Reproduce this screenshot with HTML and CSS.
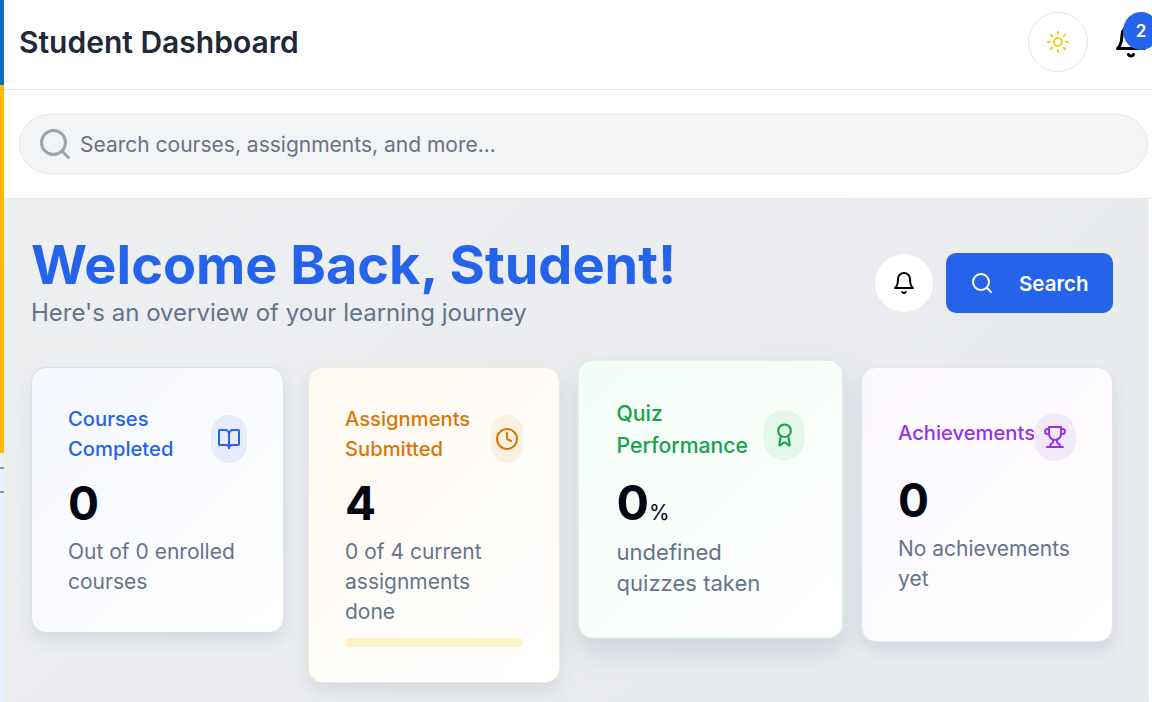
FILE: index.html
```html
<!DOCTYPE html>
<html lang="en">
<head>
<meta charset="utf-8">
<title>Student Dashboard</title>
<link rel="stylesheet" href="styles.css">
</head>
<body>
<div class="app">
  <aside class="rail">
    <div class="rail-blue"></div>
    <div class="rail-amber"></div>
    <div class="rail-rest">
      <div class="rail-line"></div>
      <div class="rail-line rail-line-2"></div>
    </div>
  </aside>
  <div class="page">
    <header class="topbar">
      <h1 class="title">Student Dashboard</h1>
      <div class="top-actions">
        <button class="theme-btn" aria-label="Theme">
          <svg class="i-sun" viewBox="0 0 24 24"><circle cx="12" cy="12" r="4"/><path d="M12 2v2M12 20v2M4.93 4.93l1.41 1.41M17.66 17.66l1.41 1.41M2 12h2M20 12h2M6.34 17.66l-1.41 1.41M19.07 4.93l-1.41 1.41"/></svg>
        </button>
        <div class="notif">
          <svg class="i-bell-top" viewBox="0 0 24 24"><path d="M6 8a6 6 0 0 1 12 0c0 7 3 9 3 9H3s3-2 3-9"/><path d="M10.3 21a1.94 1.94 0 0 0 3.4 0"/></svg>
          <span class="badge">2</span>
        </div>
      </div>
    </header>
    <div class="searchbar">
      <div class="search-field">
        <svg class="i-search-lg" viewBox="0 0 24 24"><circle cx="11" cy="11" r="8"/><path d="m21 21-4.3-4.3"/></svg>
        <span class="placeholder">Search courses, assignments, and more...</span>
      </div>
    </div>
    <main class="main">
      <section class="hero">
        <div class="hero-text">
          <h2 class="welcome">Welcome Back, Student!</h2>
          <p class="subtitle">Here's an overview of your learning journey</p>
        </div>
        <div class="hero-actions">
          <button class="round-btn" aria-label="Notifications">
            <svg class="i-bell" viewBox="0 0 24 24"><path d="M6 8a6 6 0 0 1 12 0c0 7 3 9 3 9H3s3-2 3-9"/><path d="M10.3 21a1.94 1.94 0 0 0 3.4 0"/></svg>
          </button>
          <button class="search-btn">
            <svg class="i-search" viewBox="0 0 24 24"><circle cx="11" cy="11" r="8"/><path d="m21 21-4.3-4.3"/></svg>
            <span>Search</span>
          </button>
        </div>
      </section>
      <section class="cards">
        <article class="card card-blue">
          <div class="card-head">
            <h3 class="card-title">Courses Completed</h3>
            <div class="card-icon"><svg viewBox="0 0 24 24"><path d="M12 7v14"/><path d="M3 18a1 1 0 0 1-1-1V4a1 1 0 0 1 1-1h5a4 4 0 0 1 4 4 4 4 0 0 1 4-4h5a1 1 0 0 1 1 1v13a1 1 0 0 1-1 1h-6a3 3 0 0 0-3 3 3 3 0 0 0-3-3z"/></svg></div>
          </div>
          <div class="num">0</div>
          <p class="desc">Out of 0 enrolled courses</p>
        </article>
        <article class="card card-amber">
          <div class="card-head">
            <h3 class="card-title">Assignments Submitted</h3>
            <div class="card-icon"><svg viewBox="0 0 24 24"><circle cx="12" cy="12" r="10"/><path d="M12 6v6l4 2"/></svg></div>
          </div>
          <div class="num">4</div>
          <p class="desc">0 of 4 current assignments done</p>
          <div class="progress"></div>
        </article>
        <article class="card card-green">
          <div class="card-head">
            <h3 class="card-title">Quiz Performance</h3>
            <div class="card-icon"><svg viewBox="0 0 24 24"><path d="m15.477 12.89 1.515 8.526a.5.5 0 0 1-.81.47l-3.58-2.687a1 1 0 0 0-1.197 0l-3.586 2.686a.5.5 0 0 1-.81-.469l1.514-8.526"/><circle cx="12" cy="8" r="6"/></svg></div>
          </div>
          <div class="num">0<span class="unit">%</span></div>
          <p class="desc">undefined quizzes taken</p>
        </article>
        <article class="card card-purple">
          <div class="card-head">
            <h3 class="card-title">Achievements</h3>
            <div class="card-icon"><svg viewBox="0 0 24 24"><path d="M6 9H4.5a2.5 2.5 0 0 1 0-5H6"/><path d="M18 9h1.5a2.5 2.5 0 0 0 0-5H18"/><path d="M4 22h16"/><path d="M10 14.66V17c0 .55-.47.98-.97 1.21C7.85 18.75 7 20.24 7 22"/><path d="M14 14.66V17c0 .55.47.98.97 1.21C16.15 18.75 17 20.24 17 22"/><path d="M18 2H6v7a6 6 0 0 0 12 0V2Z"/></svg></div>
          </div>
          <div class="num">0</div>
          <p class="desc">No achievements yet</p>
        </article>
      </section>
    </main>
  </div>
</div>
</body>
</html>
```
FILE: styles.css
```css
* { box-sizing: border-box; }
html, body { margin: 0; height: 702px; overflow: hidden; background: #fff; }
body { font-family: Inter, "Liberation Sans", sans-serif; color: #0f172a; }
h1, h2, h3, p { margin: 0; }
button { font-family: inherit; border: 0; padding: 0; cursor: pointer; }
svg { display: block; fill: none; stroke: currentColor; stroke-linecap: round; stroke-linejoin: round; stroke-width: 2; }

.app { display: flex; width: 1152px; height: 702px; overflow: hidden; }
.rail { flex: 0 0 4px; display: flex; flex-direction: column; background: #e6f2ff; }
.rail-blue { height: 85px; background: #0f6cbd; }
.rail-amber { height: 368px; background: #ffb900; }
.rail-rest { flex: 1; padding-top: 14px; }
.rail-line { height: 2px; background: #8a94a3; }
.rail-line-2 { margin-top: 22px; }

.page { flex: 1; display: flex; flex-direction: column; min-width: 0; }
.topbar { height: 90px; flex: none; display: flex; align-items: flex-start; justify-content: space-between; padding: 12px 0 0 15px; border-bottom: 1px solid #e5e7eb; background: #fff; }
.title { font-size: 30px; line-height: 60px; font-weight: 600; color: #1f2937; }
.top-actions { display: flex; align-items: flex-start; gap: 25px; }
.theme-btn { width: 60px; height: 60px; border-radius: 50%; border: 1px solid #e5e7eb; background: #fff; display: flex; align-items: center; justify-content: center; color: #facc15; }
.i-sun { width: 24px; height: 24px; }
.notif { position: relative; width: 39px; height: 60px; padding-top: 11px; }
.i-bell-top { width: 36px; height: 36px; color: #000; }
.badge { position: absolute; left: 10px; top: 0; width: 36px; height: 38px; border-radius: 50%; background: #2563eb; color: #fff; font-size: 17px; font-weight: 600; display: flex; align-items: center; justify-content: center; }

.searchbar { height: 109px; flex: none; padding: 24px 0 0 15px; border-bottom: 1px solid #e5e7eb; background: #fff; }
.search-field { width: 1129px; height: 60px; border-radius: 30px; border: 1px solid #e5e7eb; background: #f3f4f6; display: flex; align-items: center; padding-left: 17px; gap: 7px; }
.i-search-lg { flex: none; width: 36px; height: 36px; color: #9ca3af; }
.placeholder { font-size: 21px; color: #6b7280; }

.main { flex: 1; width: 1145px; padding: 35px 36px 0 27px; background: linear-gradient(135deg, #eeeff1 0%, #e7eaee 100%); }
.hero { display: flex; align-items: center; justify-content: space-between; padding-bottom: 4px; margin-bottom: 33px; }
.welcome { font-size: 54px; line-height: 62px; font-weight: 700; color: #2563eb; }
.subtitle { font-size: 24px; line-height: 34px; color: #64748b; }
.hero-actions { display: flex; align-items: center; gap: 13px; margin-top: 2px; }
.round-btn { width: 58px; height: 58px; border-radius: 50%; background: #fff; display: flex; align-items: center; justify-content: center; color: #000; }
.i-bell { width: 24px; height: 24px; }
.search-btn { width: 167px; height: 60px; border-radius: 10px; background: #2563eb; color: #fff; display: flex; align-items: center; gap: 25px; padding-left: 24px; font-size: 20.5px; font-weight: 600; }
.i-search { width: 24px; height: 24px; }

.cards { display: grid; grid-template-columns: 253px 252px 253px 252px; gap: 24px; align-items: start; }
.card { border-radius: 15px; border: 1px solid; padding: 36px 36px 35px; box-shadow: 0 8px 16px rgba(100, 116, 139, .16); }
.card-head { display: flex; align-items: center; justify-content: space-between; }
.card-title { font-size: 20.2px; line-height: 30px; font-weight: 500; margin-bottom: 10px; flex: 1 1 0; min-width: 0; }
.card-icon { flex: 0 0 36px; height: 48px; margin: 9px 0; border-radius: 24px; display: flex; align-items: center; justify-content: center; }
.card-icon svg { flex: none; width: 24px; height: 24px; }
.num { font-size: 46px; line-height: 58px; font-weight: 700; color: #030712; margin-bottom: 5px; }
.unit { font-size: 20px; line-height: 1; font-weight: 400; }
.desc { font-size: 21px; line-height: 30px; color: #64748b; }
.progress { height: 9px; margin-top: 11px; border-radius: 5px; background: #fef3c7; }

.card-blue { background: linear-gradient(135deg, #f5f8ff, #fff); border-color: #d5e0f5; }
.card-blue .card-title, .card-blue .card-icon { color: #2563eb; }
.card-blue .card-icon { background: #e6ecfb; }
.card-amber { background: linear-gradient(135deg, #fffaf2, #fff); border-color: #f6ecd6; }
.card-amber .card-title, .card-amber .card-icon { color: #d97706; }
.card-amber .card-icon { background: #fbf1e2; flex-basis: 32px; }
.card-green { background: linear-gradient(135deg, #f3fdf7, #fff); border-color: #d6f0df; padding-bottom: 36px; transform: translateY(-1px) scale(1.05); box-shadow: 0 12px 24px rgba(100, 116, 139, .2); }
.card-green .card-title, .card-green .card-icon { color: #16a34a; }
.card-green .card-icon { background: #e5f6ea; flex-basis: 38.6px; }
.card-green .num { margin-bottom: 4px; }
.card-purple { background: linear-gradient(135deg, #fcf8ff, #fff); border-color: #ebe0f5; padding-bottom: 47px; }
.card-purple .card-title, .card-purple .card-icon { color: #9333ea; }
.card-purple .card-icon { background: #f3e9fd; flex-basis: 42px; margin: 9px 0 10px; }
```
